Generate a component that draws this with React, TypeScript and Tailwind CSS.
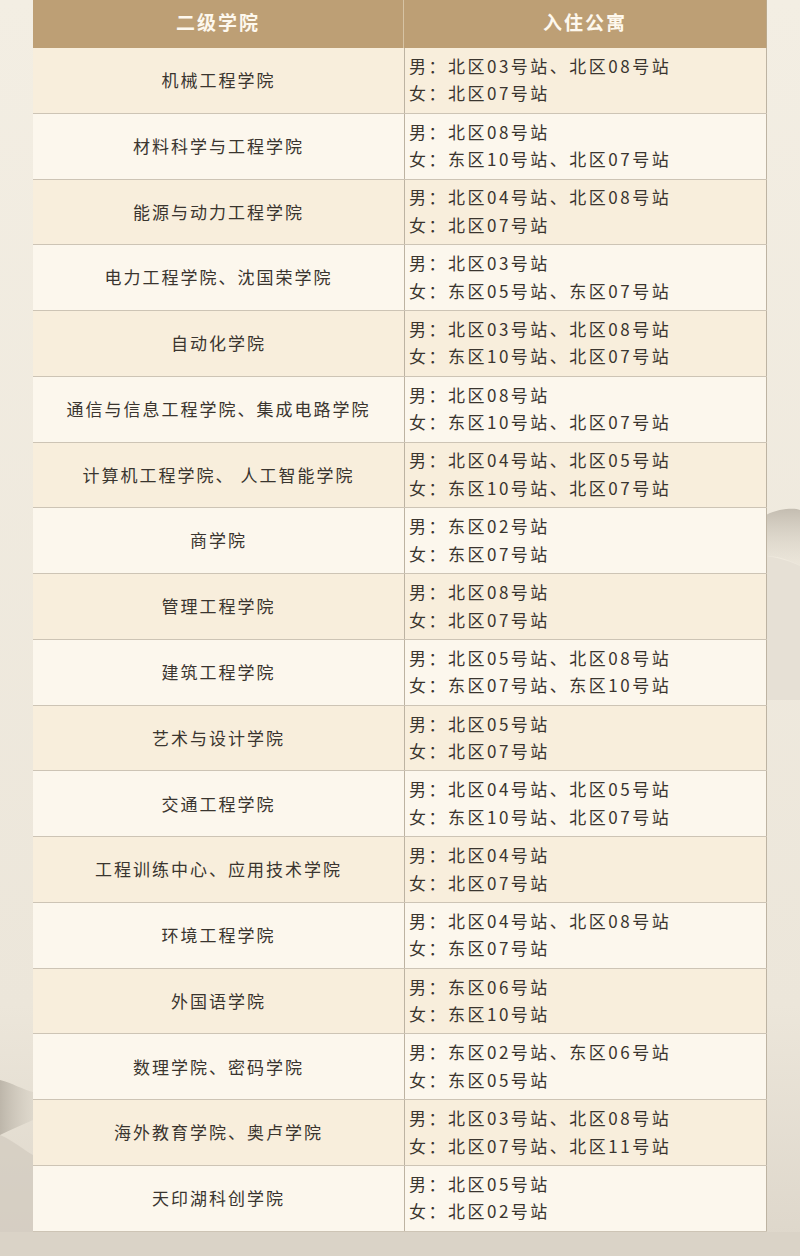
import React from "react";

const rows: [string, string, string][] = [
  ["机械工程学院", "北区03号站、北区08号站", "北区07号站"],
  ["材料科学与工程学院", "北区08号站", "东区10号站、北区07号站"],
  ["能源与动力工程学院", "北区04号站、北区08号站", "北区07号站"],
  ["电力工程学院、沈国荣学院", "北区03号站", "东区05号站、东区07号站"],
  ["自动化学院", "北区03号站、北区08号站", "东区10号站、北区07号站"],
  ["通信与信息工程学院、集成电路学院", "北区08号站", "东区10号站、北区07号站"],
  ["计算机工程学院、 人工智能学院", "北区04号站、北区05号站", "东区10号站、北区07号站"],
  ["商学院", "东区02号站", "东区07号站"],
  ["管理工程学院", "北区08号站", "北区07号站"],
  ["建筑工程学院", "北区05号站、北区08号站", "东区07号站、东区10号站"],
  ["艺术与设计学院", "北区05号站", "北区07号站"],
  ["交通工程学院", "北区04号站、北区05号站", "东区10号站、北区07号站"],
  ["工程训练中心、应用技术学院", "北区04号站", "北区07号站"],
  ["环境工程学院", "北区04号站、北区08号站", "东区07号站"],
  ["外国语学院", "东区06号站", "东区10号站"],
  ["数理学院、密码学院", "东区02号站、东区06号站", "东区05号站"],
  ["海外教育学院、奥卢学院", "北区03号站、北区08号站", "北区07号站、北区11号站"],
  ["天印湖科创学院", "北区05号站", "北区02号站"],
];

function Backdrop() {
  return (
    <svg
      className="absolute inset-0 w-full h-full"
      viewBox="0 0 800 1256"
      preserveAspectRatio="none"
    >
      <defs>
        <linearGradient id="bg" x1="0" y1="0" x2="0" y2="1">
          <stop offset="0" stopColor="#f3eee3" />
          <stop offset="0.8" stopColor="#ece6da" />
          <stop offset="1" stopColor="#ddd6ca" />
        </linearGradient>
        <linearGradient id="m1" x1="0" y1="0" x2="0" y2="1">
          <stop offset="0" stopColor="#c4bdb1" />
          <stop offset="1" stopColor="#e6e0d4" stopOpacity="0.4" />
        </linearGradient>
        <linearGradient id="m2" x1="0" y1="0" x2="1" y2="0">
          <stop offset="0" stopColor="#bdb6aa" />
          <stop offset="1" stopColor="#d9d3c7" stopOpacity="0.6" />
        </linearGradient>
      </defs>
      <rect width="800" height="1256" fill="url(#bg)" />
      <path d="M766 515 C 780 508, 795 508, 800 510 L 800 566 C 790 560, 778 556, 766 556 Z" fill="url(#m1)" />
      <path d="M766 556 C 780 558, 792 562, 800 566 L 800 700 L 766 700 Z" fill="#e6e0d5" />
      <path d="M0 1080 C 12 1083, 24 1090, 33 1092 L 33 1120 C 22 1125, 10 1130, 0 1135 Z" fill="url(#m2)" />
      <path d="M0 1135 C 12 1140, 24 1150, 33 1155 L 33 1232 L 0 1232 Z" fill="#d2cbbf" opacity="0.7" />
      <path d="M0 1232 L 800 1232 L 800 1256 L 0 1256 Z" fill="#dad3c7" />
    </svg>
  );
}

export default function App() {
  const font = { fontFamily: '"Noto Sans CJK SC", "Noto Sans", sans-serif' };
  return (
    <div className="relative w-[800px] h-[1256px] overflow-hidden" style={font}>
      <Backdrop />
      <div className="relative ml-[33px] w-[734px] flex flex-col">
        <div className="flex h-[48px] bg-[#bd9f75] text-[#fdf8ee] font-bold text-[19px] tracking-[2px]">
          <div className="w-[371px] flex items-center justify-center pb-[4px] border-r border-[#d6c3a4]">
            二级学院
          </div>
          <div className="flex-1 flex items-center justify-center pb-[4px] border-r border-[#bba98c]">
            入住公寓
          </div>
        </div>
        {rows.map((r, i) => (
          <div
            key={i}
            className={
              "flex h-[65.78px] border-b border-[#cdc4b5] text-[#3a352f] text-[17px] " +
              (i % 2 === 0 ? "bg-[#f8eedc]" : "bg-[#fcf7ed]")
            }
          >
            <div className="w-[371px] flex items-center justify-center tracking-[2px] pb-[1px]">
              {r[0]}
            </div>
            <div className="flex-1 flex flex-col justify-center pl-[4px] border-l border-r border-[#bdb3a2] tracking-[2.5px] leading-[27.5px] pb-[2px]">
              <div>男：{r[1]}</div>
              <div>女：{r[2]}</div>
            </div>
          </div>
        ))}
      </div>
    </div>
  );
}
